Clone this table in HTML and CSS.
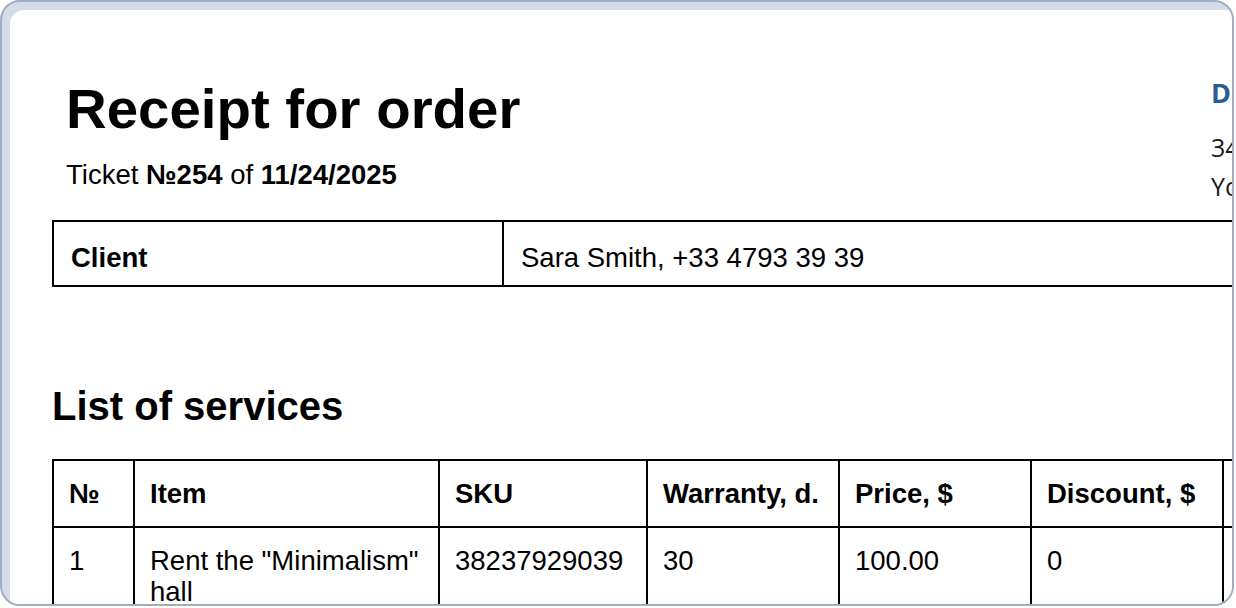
FILE: index.html
```html
<!DOCTYPE html>
<html lang="en">
<head>
<meta charset="utf-8">
<title>Receipt for order</title>
<link rel="stylesheet" href="styles.css">
</head>
<body>
<div class="frame">
  <div class="page">
    <div class="doc">
      <header class="head">
        <div class="title-block">
          <h1 class="title">Receipt for order</h1>
          <p class="ticket">Ticket <b>№254</b> of <b>11/24/2025</b></p>
        </div>
        <div class="company">
          <div class="company-name">DEMO Hall</div>
          <div class="company-line">34 Park Avenue</div>
          <div class="company-line">York, NY 10001</div>
        </div>
      </header>

      <table class="client">
        <colgroup><col class="c-label"><col></colgroup>
        <tr>
          <th>Client</th>
          <td>Sara Smith, +33 4793 39 39</td>
        </tr>
      </table>

      <h2 class="section">List of services</h2>

      <table class="services">
        <colgroup>
          <col class="w-no"><col class="w-item"><col class="w-sku"><col class="w-std"><col class="w-std"><col class="w-std"><col class="w-std">
        </colgroup>
        <thead>
          <tr>
            <th>№</th><th>Item</th><th>SKU</th><th>Warranty, d.</th><th>Price, $</th><th>Discount, $</th><th>Amount, $</th>
          </tr>
        </thead>
        <tbody>
          <tr>
            <td>1</td><td>Rent the "Minimalism" hall</td><td>38237929039</td><td>30</td><td>100.00</td><td>0</td><td>100.00</td>
          </tr>
          <tr>
            <td>2</td><td>Photographer services</td><td>38237929040</td><td>14</td><td>50.00</td><td>0</td><td>50.00</td>
          </tr>
        </tbody>
      </table>
    </div>
  </div>
</div>
</body>
</html>
```

FILE: styles.css
```css
html, body {
  margin: 0;
  padding: 0;
  background: #ffffff;
}

.frame {
  box-sizing: border-box;
  width: 1234px;
  height: 606px;
  border: 2px solid #a2aebd;
  border-radius: 20px;
  background: #d3dde8;
  padding: 8px 0 0 8px;
  overflow: hidden;
}

.page {
  height: 100%;
  background: #ffffff;
  border-top-left-radius: 14px;
  overflow: hidden;
  padding: 67px 0 0 42px;
  box-sizing: border-box;
}

.doc {
  width: 1460px;
  font-family: "Liberation Sans", Arial, sans-serif;
  font-size: 27.5px;
  color: #000;
}

.head {
  display: grid;
  grid-template-columns: 1159px 1fr;
  align-items: start;
}

.title-block {
  padding-left: 14px;
}

.title {
  margin: 0;
  font-size: 56.4px;
  font-weight: bold;
  line-height: 64px;
}

.ticket {
  margin: 18px 0 0;
  line-height: 31px;
}

.company {
  font-family: "Open Sans", sans-serif;
  margin-top: -3px;
  margin-bottom: -60px;
}

.company-name {
  color: #2b5d93;
  font-weight: 700;
  font-size: 27px;
  line-height: 38px;
  white-space: nowrap;
}

.company-line {
  font-size: 25px;
  line-height: 39px;
  color: #1a1a1a;
  white-space: nowrap;
}

.company-name + .company-line {
  margin-top: 16px;
}

table {
  border-collapse: collapse;
  table-layout: fixed;
}

th, td {
  border: 2px solid #000;
  text-align: left;
  vertical-align: top;
  line-height: 31px;
}

th {
  font-weight: bold;
}

.client {
  width: 100%;
  margin-top: 30px;
}

.client .c-label {
  width: 450px;
}

.client th, .client td {
  padding: 20px 15px 12px 17px;
}

.section {
  margin: 96px 0 0;
  font-size: 40px;
  font-weight: bold;
  line-height: 46px;
}

.services {
  margin-top: 30px;
  width: 1361px;
}

.services th, .services td {
  padding: 17px 15px;
}

.w-no { width: 81px; }
.w-item { width: 305px; }
.w-sku { width: 208px; }
.w-std { width: 192px; }
```
